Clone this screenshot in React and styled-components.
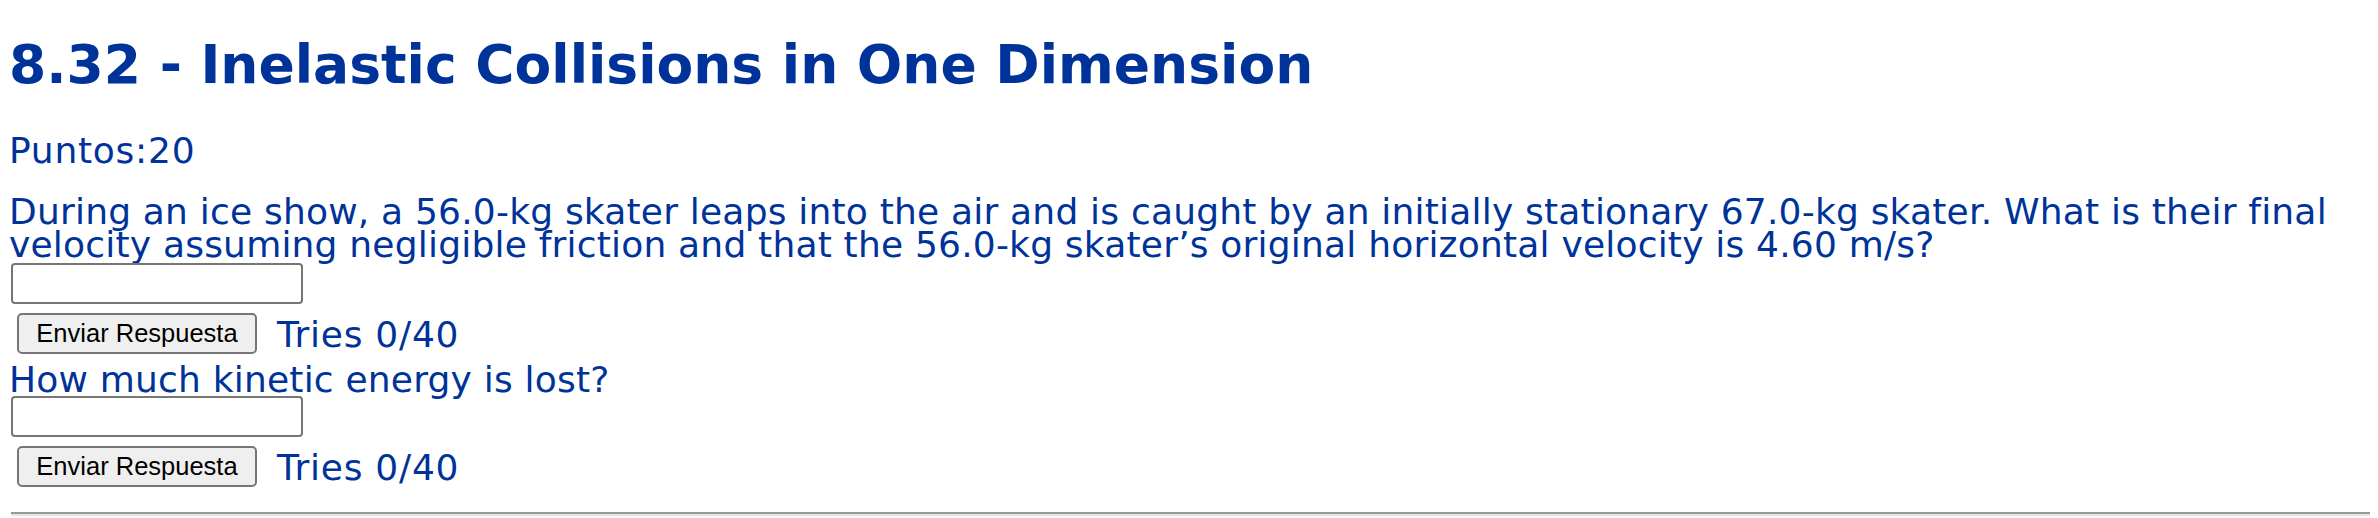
import React from "react";
import styled, { createGlobalStyle } from "styled-components";

const Global = createGlobalStyle`
  html, body { margin: 0; padding: 0; background: #ffffff; }
  body { font-family: "DejaVu Sans", Verdana, sans-serif; color: #003399; }
`;

const Page = styled.div`
  padding: 37.9px 8px 0 9px;
  display: flex;
  flex-direction: column;
  align-items: flex-start;
`;

const Title = styled.h1`
  margin: 0;
  font-family: "DejaVu Sans", Verdana, sans-serif;
  font-weight: bold;
  font-size: 53.5px;
  line-height: 54px;
  color: #003399;
`;

const Text = styled.div`
  font-size: 36px;
  letter-spacing: ${(p) => p.$spacing ?? 0.2}px;
  line-height: 33px;
  margin-top: ${(p) => p.$top || 0}px;
  color: #003399;
`;

const Answer = styled.input`
  box-sizing: border-box;
  width: 292px;
  height: 41px;
  margin: ${(p) => p.$top || 0}px 0 0 2px;
  border: 2px solid #767676;
  border-radius: 4px;
  background: #ffffff;
  padding: 0 6px;
  font-size: 24px;
  display: block;
`;

const Row = styled.div`
  display: flex;
  align-items: flex-start;
  margin-top: 9px;
`;

const SendButton = styled.button`
  box-sizing: border-box;
  width: 240px;
  height: 41px;
  margin: 0 0 0 8px;
  padding: 0;
  border: 2px solid #767676;
  border-radius: 5px;
  background: #efefef;
  color: #000000;
  font-family: "Liberation Sans", Arial, sans-serif;
  font-size: 25.5px;
  line-height: 37px;
  text-align: center;
`;

const Tries = styled.span`
  font-size: 36px;
  letter-spacing: 0.75px;
  line-height: 33px;
  margin: 4.8px 0 0 20px;
  color: #003399;
`;

const Rule = styled.hr`
  align-self: stretch;
  margin: 25px 0 0 2px;
  height: 0;
  border: 0;
  border-top: 2px solid #999999;
  border-bottom: 2px solid #e6e6e6;
`;

export default function App() {
  return (
    <>
      <Global />
      <Page>
        <Title>8.32 - Inelastic Collisions in One Dimension</Title>
        <Text $top={42} $spacing={0.75}>Puntos:20</Text>
        <Text $top={28.6}>
          During an ice show, a 56.0-kg skater leaps into the air and is caught by an initially stationary 67.0-kg skater. What is their final velocity assuming negligible friction and that the 56.0-kg skater’s original horizontal velocity is 4.60 m/s?
        </Text>
        <Answer type="text" $top={1.3} />
        <Row>
          <SendButton type="button">Enviar Respuesta</SendButton>
          <Tries>Tries 0/40</Tries>
        </Row>
        <Text $top={9.1}>How much kinetic energy is lost?</Text>
        <Answer type="text" $top={0} />
        <Row>
          <SendButton type="button">Enviar Respuesta</SendButton>
          <Tries>Tries 0/40</Tries>
        </Row>
        <Rule />
      </Page>
    </>
  );
}
